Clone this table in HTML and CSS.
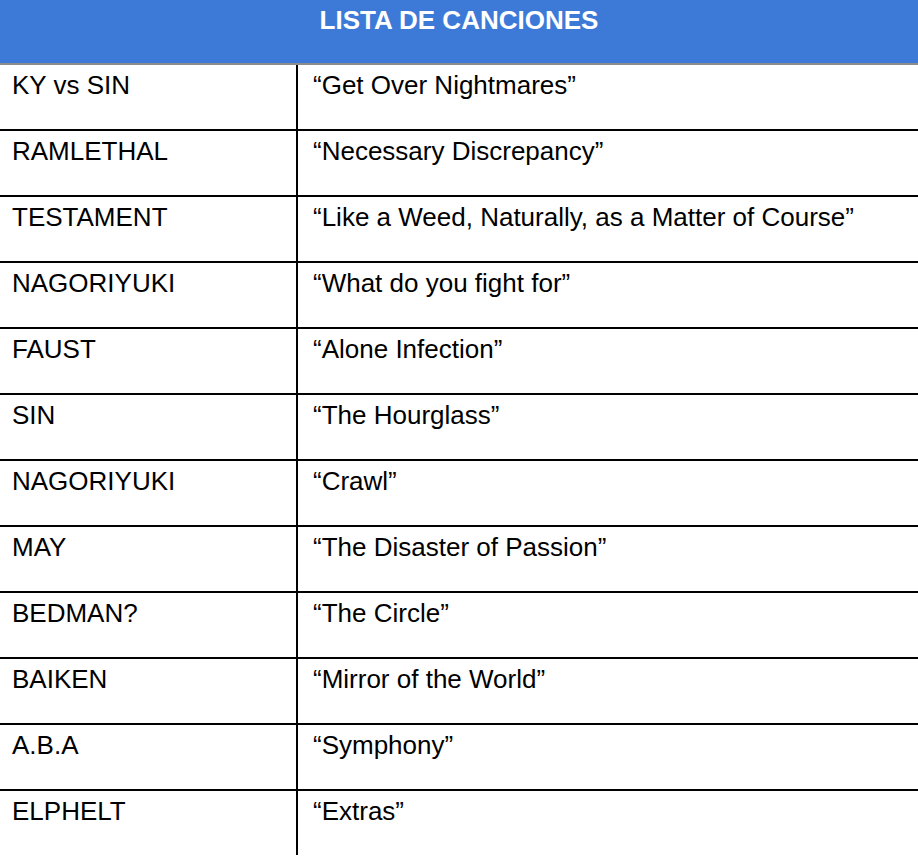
FILE: index.html
```html
<!DOCTYPE html>
<html lang="es">
<head>
<meta charset="utf-8">
<title>Lista de canciones</title>
<link rel="stylesheet" href="styles.css">
</head>
<body>
<div class="table">
  <div class="head">LISTA DE CANCIONES</div>
  <div class="row"><div class="c1">KY vs SIN</div><div class="c2">“Get Over Nightmares”</div></div>
  <div class="row"><div class="c1">RAMLETHAL</div><div class="c2">“Necessary Discrepancy”</div></div>
  <div class="row"><div class="c1">TESTAMENT</div><div class="c2">“Like a Weed, Naturally, as a Matter of Course”</div></div>
  <div class="row"><div class="c1">NAGORIYUKI</div><div class="c2">“What do you fight for”</div></div>
  <div class="row"><div class="c1">FAUST</div><div class="c2">“Alone Infection”</div></div>
  <div class="row"><div class="c1">SIN</div><div class="c2">“The Hourglass”</div></div>
  <div class="row"><div class="c1">NAGORIYUKI</div><div class="c2">“Crawl”</div></div>
  <div class="row"><div class="c1">MAY</div><div class="c2">“The Disaster of Passion”</div></div>
  <div class="row"><div class="c1">BEDMAN?</div><div class="c2">“The Circle”</div></div>
  <div class="row"><div class="c1">BAIKEN</div><div class="c2">“Mirror of the World”</div></div>
  <div class="row"><div class="c1">A.B.A</div><div class="c2">“Symphony”</div></div>
  <div class="row last"><div class="c1">ELPHELT</div><div class="c2">“Extras”</div></div>
</div>
</body>
</html>
```
FILE: styles.css
```css
html, body {
  margin: 0;
  padding: 0;
  background: #ffffff;
}
body {
  font-family: "Liberation Sans", Arial, sans-serif;
  color: #000;
  width: 918px;
  height: 856px;
  overflow: hidden;
}
.table {
  display: flex;
  flex-direction: column;
}
.head {
  height: 58px;
  padding-top: 5px;
  background: #3d7ad8;
  border-bottom: 2px solid #8c8c8c;
  color: #fff;
  font-weight: bold;
  font-size: 26px;
  line-height: 30px;
  text-align: center;
}
.row {
  display: grid;
  grid-template-columns: 296px 1fr;
  height: 64px;
  border-bottom: 2px solid #000;
  font-size: 26px;
  line-height: 28px;
}
.row.last {
  border-bottom: none;
}
.c1 {
  padding: 6px 0 0 12px;
}
.c2 {
  border-left: 2px solid #000;
  padding: 6px 0 0 15px;
}
```
